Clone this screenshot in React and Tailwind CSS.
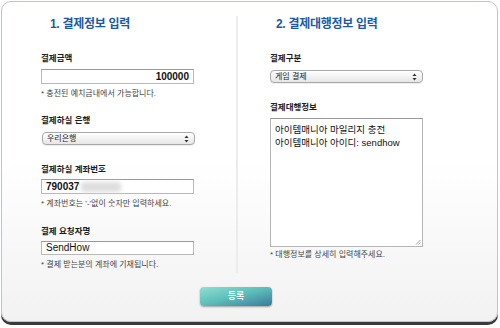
import { useState } from "react";

const font = { fontFamily: '"Liberation Sans", "Noto Sans CJK KR", sans-serif' };

function Arrows() {
  return (
    <svg width="5" height="8" viewBox="0 0 5 8" className="shrink-0">
      <path d="M2.5 0.5 L4.5 3 L0.5 3 Z" fill="#333" />
      <path d="M2.5 7.5 L4.5 5 L0.5 5 Z" fill="#333" />
    </svg>
  );
}

function Select({ value, className = "" }) {
  return (
    <div
      className={`flex h-[13px] w-[153px] items-center justify-between rounded-[4px] border border-[#a9a9a9] bg-gradient-to-b from-white to-[#e6e6e6] pl-[4px] pr-[5px] shadow-[0_1px_0_#eee] ${className}`}
    >
      <span className="text-[8px] leading-none text-[#222]">{value}</span>
      <Arrows />
    </div>
  );
}

function Input({ value, className = "", textClass = "" }) {
  return (
    <div
      className={`flex w-[153px] items-center border border-[#b9b9b9] border-t-[#9a9a9a] bg-white px-[4px] ${className}`}
    >
      <span className={`text-[10px] leading-none text-[#111] ${textClass}`}>{value}</span>
    </div>
  );
}

function Label({ children, className = "" }) {
  return (
    <div className={`text-[8.5px] font-bold leading-[12px] text-[#1c1c1c] ${className}`}>{children}</div>
  );
}

function Note({ children, className = "" }) {
  return <div className={`text-[8px] leading-[12px] text-[#444] ${className}`}>{children}</div>;
}

export default function App() {
  const [info] = useState(["아이템매니아 마일리지 충전", "아이템매니아 아이디: sendhow"]);

  return (
    <div className="h-[328px] w-[500px] overflow-hidden bg-white" style={font}>
      <div className="ml-[1px] mt-[1px] flex h-[321px] w-[497px] flex-col rounded-[10px] border border-[#c3c3d0] bg-gradient-to-b from-white via-white to-[#f2f2f2] shadow-[0_3px_0_#3a3a3a]">
        <div className="flex items-start">
          {/* left */}
          <div className="w-[234px] pl-[39px] pt-[14px]">
            <h3 className="pl-[9px] text-[12px] font-bold leading-[16px] tracking-[-0.3px] text-[#1c5aa3]">1. 결제정보 입력</h3>

            <Label className="mt-[20px]">결제금액</Label>
            <Input value="100000" className="mt-[5px] h-[15px] justify-end" textClass="font-bold" />
            <Note className="mt-[4px]">* 충전된 예치금내에서 가능합니다.</Note>

            <Label className="mt-[14px]">결제하실 은행</Label>
            <Select value="우리은행" className="ml-[1px] mt-[6px] w-[152px]" />

            <Label className="mt-[18px]">결제하실 계좌번호</Label>
            <div className="mt-[4px] flex h-[15px] w-[153px] items-center border border-[#b9b9b9] border-t-[#9a9a9a] bg-white px-[4px]">
              <span className="text-[10px] font-bold leading-none text-[#111]">790037</span>
              <span className="ml-[2px] h-[10px] w-[40px] rounded-[3px] bg-[#dedede] blur-[2px]" />
            </div>
            <Note className="mt-[4px]">* 계좌번호는 &apos;-&apos;없이 숫자만 입력하세요.</Note>

            <Label className="mt-[15px]">결제 요청자명</Label>
            <Input value="SendHow" className="mt-[4px] h-[14px]" />
            <Note className="mt-[4px]">* 결제 받는분의 계좌에 기재됩니다.</Note>
          </div>

          {/* divider */}
          <div className="mt-[14px] h-[257px] w-[2px] bg-[#ececec]" />

          {/* right */}
          <div className="pl-[32px] pt-[14px]">
            <h3 className="pl-[6px] text-[12px] font-bold leading-[16px] tracking-[-0.3px] text-[#1c5aa3]">2. 결제대행정보 입력</h3>

            <Label className="mt-[20px]">결제구분</Label>
            <Select value="게임 결제" className="mt-[6px]" />

            <Label className="mt-[18px]">결제대행정보</Label>
            <div className="relative mt-[5px] h-[129px] w-[153px] border border-[#b5b5b5] border-t-[#999] bg-white px-[4px] py-[4px]">
              {info.map((line) => (
                <div key={line} className="text-[9.5px] leading-[13px] text-[#111]">
                  {line}
                </div>
              ))}
              <svg width="6" height="6" viewBox="0 0 6 6" className="absolute bottom-[1px] right-[1px]">
                <path d="M1 5.5 L5.5 1 M3.5 5.5 L5.5 3.5" stroke="#888" strokeWidth="0.8" />
              </svg>
            </div>
            <Note className="mt-[2px]">* 대행정보를 상세히 입력해주세요.</Note>
          </div>
        </div>

        <button className="ml-[198px] mt-[14px] flex h-[19px] w-[72px] items-center justify-center rounded-[4px] bg-gradient-to-br from-[#8ee0d2] via-[#5cbcb8] to-[#3a7a9a] text-[9px] font-bold text-[#e6f7ef] shadow-[0_1px_2px_rgba(0,0,0,0.35)]">
          등록
        </button>
      </div>
    </div>
  );
}
